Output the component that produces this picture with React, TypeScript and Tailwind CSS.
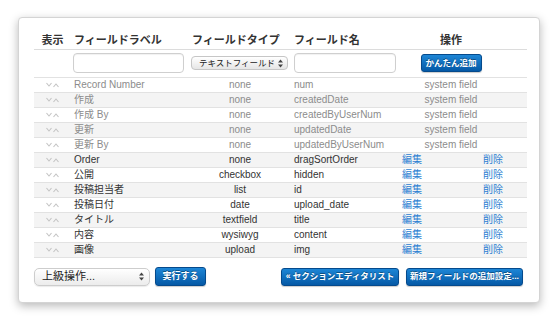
import React from 'react';

type Row = {
  label: string;
  type: string;
  name: string;
  system?: boolean;
};

const rows: Row[] = [
  { label: 'Record Number', type: 'none', name: 'num', system: true },
  { label: '作成', type: 'none', name: 'createdDate', system: true },
  { label: '作成 By', type: 'none', name: 'createdByUserNum', system: true },
  { label: '更新', type: 'none', name: 'updatedDate', system: true },
  { label: '更新 By', type: 'none', name: 'updatedByUserNum', system: true },
  { label: 'Order', type: 'none', name: 'dragSortOrder' },
  { label: '公開', type: 'checkbox', name: 'hidden' },
  { label: '投稿担当者', type: 'list', name: 'id' },
  { label: '投稿日付', type: 'date', name: 'upload_date' },
  { label: 'タイトル', type: 'textfield', name: 'title' },
  { label: '内容', type: 'wysiwyg', name: 'content' },
  { label: '画像', type: 'upload', name: 'img' },
];

function SortArrows() {
  return (
    <svg width="13" height="6" viewBox="0 0 13 6" className="mx-auto block">
      <path d="M0.5 1 L3 4 L5.5 1" fill="none" stroke="#c4c4c4" strokeWidth="1.1" />
      <path d="M7.5 5 L10 2 L12.5 5" fill="none" stroke="#c4c4c4" strokeWidth="1.1" />
    </svg>
  );
}

function UpDown() {
  return (
    <svg width="5" height="9" viewBox="0 0 5 9" className="shrink-0">
      <path d="M0 3.5 L2.5 0.5 L5 3.5 Z" fill="#444" />
      <path d="M0 5.5 L2.5 8.5 L5 5.5 Z" fill="#444" />
    </svg>
  );
}

function BlueButton({ children, className }: { children: React.ReactNode; className: string }) {
  return (
    <button
      className={`flex items-center justify-center rounded-[3px] border border-[#054a8c] bg-gradient-to-b from-[#1d86d6] to-[#0559a6] font-bold text-white text-[8.5px] leading-none shadow-[0_1px_1px_rgba(0,0,0,0.2)] [text-shadow:0_-1px_0_rgba(0,0,0,0.35)] ${className}`}
    >
      {children}
    </button>
  );
}

export default function App() {
  return (
    <div className="w-[560px] h-[321px] bg-white pl-[18px] pt-[17px] font-['Liberation_Sans','Noto_Sans_CJK_JP',sans-serif]">
      <div className="w-[522px] h-[286px] rounded-[4px] border border-[#d4d4d4] bg-white pl-[15px] pr-[14px] pt-[15px] shadow-[0_3px_10px_rgba(0,0,0,0.28)]">
        {/* Field table */}
        <table className="w-[493px] table-fixed border-collapse">
          <colgroup>
            <col className="w-[37px]" />
            <col className="w-[118px]" />
            <col className="w-[102px]" />
            <col className="w-[108px]" />
            <col className="w-[81px]" />
            <col className="w-[47px]" />
          </colgroup>
          <thead>
            <tr className="h-[16px] text-[11px] font-bold text-[#333] leading-none">
              <th className="text-center align-middle">表示</th>
              <th className="pl-[3px] text-left align-middle">フィールドラベル</th>
              <th className="pl-[3px] text-left align-middle">フィールドタイプ</th>
              <th className="pl-[3px] text-left align-middle">フィールド名</th>
              <th colSpan={2} className="pr-[24px] text-center align-middle">操作</th>
            </tr>
          </thead>
          <tbody>
            {/* Quick add row */}
            <tr className="h-[28px] border-t border-[#dcdcdc]">
              <td />
              <td className="pl-[2px] align-middle">
                <div className="h-[20px] w-[111px] rounded-[4px] border border-[#cfcfcf] bg-white shadow-[inset_0_1px_1px_rgba(0,0,0,0.06)]" />
              </td>
              <td className="pl-[2px] align-middle">
                <div className="flex h-[14px] w-[97px] items-center gap-[3px] overflow-hidden rounded-[4px] border border-[#c6c6c6] bg-gradient-to-b from-white to-[#e6e6e6] pl-[7px] pr-[4px]">
                  <span className="whitespace-nowrap text-[8.5px] leading-none text-[#222]">テキストフィールド</span>
                  <div className="ml-auto flex items-center">
                    <UpDown />
                  </div>
                </div>
              </td>
              <td className="pl-[3px] align-middle">
                <div className="h-[20px] w-[102px] rounded-[4px] border border-[#cfcfcf] bg-white shadow-[inset_0_1px_1px_rgba(0,0,0,0.06)]" />
              </td>
              <td colSpan={2} className="pr-[24px] align-middle">
                <BlueButton className="mx-auto h-[18px] w-[61px]">かんたん追加</BlueButton>
              </td>
            </tr>

            {rows.map((row, i) => {
              const txt = row.system ? 'text-[#8c8c8c]' : 'text-[#333]';
              return (
                <tr
                  key={row.name}
                  className={`h-[15px] border-t border-[#e2e2e2] text-[10px] leading-none ${
                    i % 2 === 1 ? 'bg-[#f4f4f4]' : 'bg-white'
                  }`}
                >
                  <td className="align-middle">
                    <SortArrows />
                  </td>
                  <td className={`pl-[3px] align-middle whitespace-nowrap ${txt}`}>{row.label}</td>
                  <td className={`text-center align-middle ${txt}`}>{row.type}</td>
                  <td className={`pl-[3px] align-middle whitespace-nowrap ${txt}`}>{row.name}</td>
                  {row.system ? (
                    <td colSpan={2} className={`pr-[24px] text-center align-middle ${txt}`}>
                      system field
                    </td>
                  ) : (
                    <>
                      <td className="pl-[3px] align-middle text-[#2d7fd2]">編集</td>
                      <td className="pl-[3px] align-middle text-[#2d7fd2]">削除</td>
                    </>
                  )}
                </tr>
              );
            })}
            <tr className="border-t border-[#e2e2e2]" />
          </tbody>
        </table>

        {/* Bottom actions */}
        <div className="mt-[10px] flex items-center">
          <div className="flex items-center gap-[5px]">
            <div className="flex h-[18px] w-[116px] items-center rounded-[5px] border border-[#cdcdcd] bg-gradient-to-b from-white to-[#ececec] pl-[7px] pr-[5px] shadow-[0_1px_1px_rgba(0,0,0,0.08)]">
              <span className="text-[11px] leading-none text-[#222]">上級操作...</span>
              <div className="ml-auto flex items-center">
                <UpDown />
              </div>
            </div>
            <BlueButton className="h-[19px] w-[51px] text-[9px]">実行する</BlueButton>
          </div>
          <div className="ml-auto mr-[2px] flex items-center gap-[7px]">
            <BlueButton className="h-[18px] w-[118px]">« セクションエディタリスト</BlueButton>
            <BlueButton className="h-[18px] w-[117px]">新規フィールドの追加設定...</BlueButton>
          </div>
        </div>
      </div>
    </div>
  );
}
